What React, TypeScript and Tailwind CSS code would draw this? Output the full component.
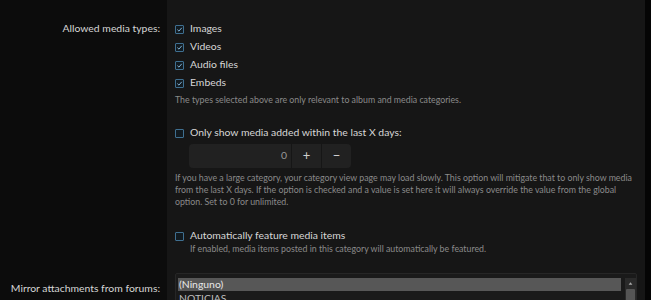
import React from "react";

const font = { fontFamily: 'Lato, "Open Sans", sans-serif' };

function Box({ checked }: { checked?: boolean }) {
  return (
    <span className="flex h-[9px] w-[9px] shrink-0 items-center justify-center rounded-[1px] border border-[#3f6f90] bg-[#111a20]">
      {checked && (
        <svg viewBox="0 0 10 10" className="h-[7px] w-[7px]">
          <path d="M2 5.2 L4.2 7.3 L8.2 2.6" fill="none" stroke="#8fc2e6" strokeWidth="1.3" />
        </svg>
      )}
    </span>
  );
}

function Check({ label, checked }: { label: string; checked?: boolean }) {
  return (
    <div className="flex h-[18px] items-center gap-[6px]">
      <Box checked={checked} />
      <span className="text-[10.4px] text-[#d6d6d6]">{label}</span>
    </div>
  );
}

function Row({ label, children, cls }: { label?: string; children: React.ReactNode; cls?: string }) {
  return (
    <div className="grid grid-cols-[167px_1fr]">
      <div className="whitespace-nowrap bg-[#0c0c0c] pr-[7px] text-right text-[10.4px] text-[#d6d6d6]">
        {label && <div className={cls}>{label}</div>}
      </div>
      <div className="bg-[#161616] pl-[8px] pr-[8px]">{children}</div>
    </div>
  );
}

export default function App() {
  return (
    <div className="flex h-[300px] w-[651px] overflow-hidden bg-[#050505]" style={font}>
      <div className="flex w-[645px] flex-col">
        <Row label="">
          <div className="h-[20px]" />
        </Row>
        <Row label="Allowed media types:" cls="flex h-[18px] items-center justify-end">
          <Check label="Images" checked />
          <Check label="Videos" checked />
          <Check label="Audio files" checked />
          <Check label="Embeds" checked />
          <div className="flex h-[16px] items-center text-[8.8px] text-[#8a8a8a]">
            The types selected above are only relevant to album and media categories.
          </div>
        </Row>
        <Row>
          <div className="h-[16px]" />
          <Check label="Only show media added within the last X days:" />
          <div className="ml-[14px] mt-[2px] flex h-[24px] w-[162px] overflow-hidden rounded-[4px] bg-[#212121] text-[#cfcfcf]">
            <div className="flex flex-1 items-center justify-end pr-[4px] text-[10.4px] text-[#9a9a9a]">0</div>
            <div className="flex w-[30px] items-center justify-center border-l border-[#161616] text-[13px]">+</div>
            <div className="flex w-[30px] items-center justify-center border-l border-[#161616] text-[13px]">−</div>
          </div>
          <div className="mt-[4px] pr-[2px] text-[8.8px] leading-[12px] text-[#8a8a8a]">
            If you have a large category, your category view page may load slowly. This option will mitigate that to only show media from the last X days. If the option is checked and a value is set here it will always override the value from the global option. Set to 0 for unlimited.
          </div>
        </Row>
        <Row>
          <div className="h-[19px]" />
          <Check label="Automatically feature media items" />
          <div className="-mt-[2px] pl-[15px] text-[8.8px] leading-[12px] text-[#8a8a8a]">
            If enabled, media items posted in this category will automatically be featured.
          </div>
          <div className="h-[18px]" />
        </Row>
        <Row label="Mirror attachments from forums:" cls="flex h-[24px] items-end justify-end">
          <div className="flex h-[60px] rounded-[2px] border border-[#262626] bg-[#1a1a1a] pl-[2px] pt-[4px]">
            <div className="flex-1 text-[10.4px] text-[#e8e8e8]">
              <div className="flex h-[13px] items-center bg-[#575757] pl-[1px]">(Ninguno)</div>
              <div className="pl-[1px] text-[#bdbdbd]">NOTICIAS</div>
            </div>
            <div className="ml-[4px] flex w-[11px] flex-col bg-[#2a2a2a]">
              <div className="flex h-[11px] items-center justify-center">
                <svg viewBox="0 0 8 8" className="h-[5px] w-[5px]"><path d="M1 6 L4 2 L7 6 Z" fill="#aaa" /></svg>
              </div>
              <div className="mx-[1px] flex-1 rounded-[1px] bg-[#555]" />
            </div>
          </div>
        </Row>
      </div>
    </div>
  );
}
